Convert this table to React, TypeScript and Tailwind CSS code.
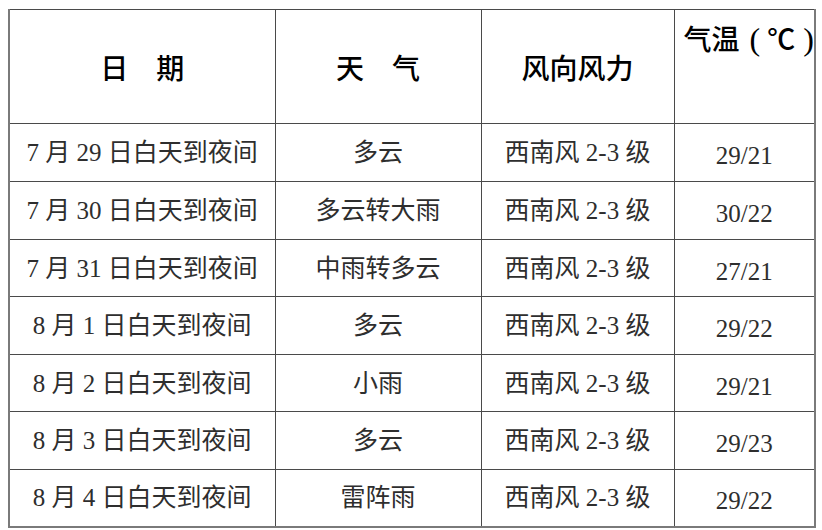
import React from "react";

const rows: [string, string, string, string][] = [
  ["7 月 29 日白天到夜间", "多云", "西南风 2-3 级", "29/21"],
  ["7 月 30 日白天到夜间", "多云转大雨", "西南风 2-3 级", "30/22"],
  ["7 月 31 日白天到夜间", "中雨转多云", "西南风 2-3 级", "27/21"],
  ["8 月 1 日白天到夜间", "多云", "西南风 2-3 级", "29/22"],
  ["8 月 2 日白天到夜间", "小雨", "西南风 2-3 级", "29/21"],
  ["8 月 3 日白天到夜间", "多云", "西南风 2-3 级", "29/23"],
  ["8 月 4 日白天到夜间", "雷阵雨", "西南风 2-3 级", "29/22"],
];

const heights = ["h-[58px]", "h-[58px]", "h-[57px]", "h-[58px]", "h-[57px]", "h-[58px]", "h-[57px]"];

export default function App() {
  const head =
    "border border-[#4a4a4a] text-center align-middle text-[28px] font-medium text-black font-['Noto_Sans_CJK_SC',sans-serif] whitespace-nowrap p-0";
  const cell =
    "border border-[#4a4a4a] text-center align-middle text-[25px] text-[#2e2e2e] font-['Liberation_Serif','Noto_Sans_CJK_SC',serif] whitespace-nowrap p-0 leading-none";
  return (
    <div className="w-[822px] h-[530px] bg-white overflow-hidden pt-[9px] pl-[8px]">
      <table className="border-collapse table-fixed w-[806px] border-l-2 border-r-2 border-b-2 border-l-[#7a7a7a] border-r-[#7a7a7a] border-b-[#7a7a7a]">
        <colgroup>
          <col className="w-[266px]" />
          <col className="w-[206px]" />
          <col className="w-[193px]" />
          <col className="w-[141px]" />
        </colgroup>
        <tbody>
          <tr className="h-[114px]">
            <td className={head}>日　期</td>
            <td className={head}>天　气</td>
            <td className={head}>风向风力</td>
            <td className="border border-[#4a4a4a] align-top text-left text-[28px] font-medium text-black font-['Noto_Sans_CJK_SC',sans-serif] whitespace-nowrap pl-[9px] pt-[12px] leading-[32px]">
              <span>气温</span>
              <span className="ml-[10px] text-[32px] font-['Liberation_Serif',serif] font-normal">(</span>
              <span className="ml-[7px]">℃</span>
              <span className="ml-[8px] text-[32px] font-['Liberation_Serif',serif] font-normal">)</span>
            </td>
          </tr>
          {rows.map((r, i) => (
            <tr key={i} className={heights[i]}>
              <td className={cell}>{r[0]}</td>
              <td className={cell}>{r[1]}</td>
              <td className={cell}>{r[2]}</td>
              <td className={cell + " pt-[6px]"}>{r[3]}</td>
            </tr>
          ))}
        </tbody>
      </table>
    </div>
  );
}
